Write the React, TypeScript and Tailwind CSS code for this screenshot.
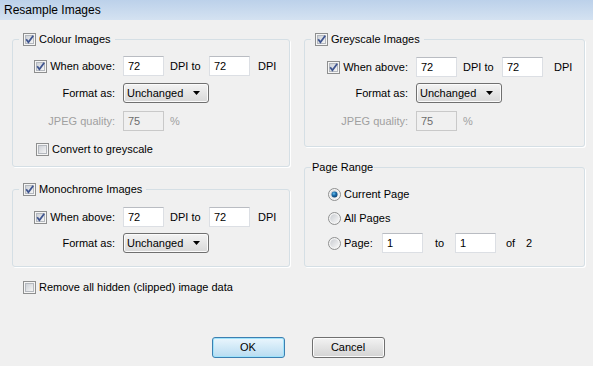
import type { ReactNode } from 'react';

function Check({ checked }: { checked?: boolean }) {
  return (
    <svg width="13" height="13" viewBox="0 0 13 13" className="shrink-0">
      <defs>
        <linearGradient id="cbFill" x1="0" y1="0" x2="1" y2="1">
          <stop offset="0" stopColor="#cbcfd5" />
          <stop offset="1" stopColor="#f7f7f7" />
        </linearGradient>
      </defs>
      <rect x="0.5" y="0.5" width="12" height="12" fill="#f5f5f5" stroke="#8e8f8f" />
      <rect x="2.5" y="2.5" width="8" height="8" fill="url(#cbFill)" stroke="#b4b8be" />
      {checked && (
        <path d="M3.2 6.3 L5.4 9.2 L10.2 2.8" fill="none" stroke="#3f5590" strokeWidth="1.8" />
      )}
    </svg>
  );
}

function Radio({ checked }: { checked?: boolean }) {
  return (
    <svg width="13" height="13" viewBox="0 0 13 13" className="shrink-0">
      <defs>
        <linearGradient id="rbFill" x1="0" y1="0" x2="1" y2="1">
          <stop offset="0" stopColor="#c9ccd1" />
          <stop offset="1" stopColor="#f8f8f8" />
        </linearGradient>
        <radialGradient id="rbDot" cx="0.4" cy="0.35" r="0.7">
          <stop offset="0" stopColor="#6fc2ec" />
          <stop offset="0.45" stopColor="#1c6fae" />
          <stop offset="1" stopColor="#0c3d6b" />
        </radialGradient>
      </defs>
      <circle cx="6.5" cy="6.5" r="6" fill="#f4f4f4" stroke="#8e8f8f" />
      <circle cx="6.5" cy="6.5" r="4.3" fill="url(#rbFill)" />
      {checked && <circle cx="6.5" cy="6.5" r="3" fill="url(#rbDot)" />}
    </svg>
  );
}

function TextBox({ value, disabled, className = '' }: { value: string; disabled?: boolean; className?: string }) {
  return (
    <div
      className={`flex h-[20px] w-[41px] shrink-0 items-center border pl-[4px] ${
        disabled
          ? 'border-[#c9c9c9] bg-[#f0f0f0] text-[#6d6d6d]'
          : 'border-[#dcdfe4] border-t-[#b9bcc2] bg-white'
      } ${className}`}
    >
      {value}
    </div>
  );
}

function Select({ className = '' }: { className?: string }) {
  return (
    <div
      className={`flex h-[20px] w-[86px] items-center justify-between rounded-[3px] border border-[#707070] bg-linear-to-b from-[#f3f3f3] to-[#d8d8d8] pl-[3px] pr-[8px] shadow-[inset_0_0_0_1px_#fbfbfb] ${className}`}
    >
      <span>Unchanged</span>
      <svg width="7" height="4" viewBox="0 0 7 4">
        <polygon points="0,0 7,0 3.5,4" fill="#000" />
      </svg>
    </div>
  );
}

function Group({ legend, className = '', children }: { legend: ReactNode; className?: string; children: ReactNode }) {
  return (
    <fieldset className={`rounded-[3px] border border-[#d5dfe5] shadow-[1px_1px_0_#fff] ${className}`}>
      {legend}
      {children}
    </fieldset>
  );
}

function CheckLegend({ label }: { label: string }) {
  return (
    <legend className="ml-[6px] px-[4px] leading-[13px]">
      <span className="flex h-[13px] items-center gap-[3px]">
        <Check checked />
        <span>{label}</span>
      </span>
    </legend>
  );
}

function DpiRow({ lw, dpiGap }: { lw: string; dpiGap: string }) {
  return (
    <div className="flex h-[20px] items-center">
      <div className={`${lw} flex items-center justify-end gap-[3px]`}>
        <Check checked />
        <span>When above:</span>
      </div>
      <TextBox value="72" className="ml-[8px]" />
      <span className="w-[45px] shrink-0 pl-[6px]">DPI to</span>
      <TextBox value="72" />
      <span className={dpiGap}>DPI</span>
    </div>
  );
}

function FormatRow({ lw, className = '' }: { lw: string; className?: string }) {
  return (
    <div className={`flex h-[20px] items-center ${className}`}>
      <div className={`${lw} text-right`}>Format as:</div>
      <Select className="ml-[8px]" />
    </div>
  );
}

function JpegRow({ lw, className = '' }: { lw: string; className?: string }) {
  return (
    <div className={`flex h-[20px] items-center text-[#a0a0a0] ${className}`}>
      <div className={`${lw} text-right`}>JPEG quality:</div>
      <TextBox value="75" disabled className="ml-[8px]" />
      <span className="ml-[6px]">%</span>
    </div>
  );
}

function Button({ label, primary }: { label: string; primary?: boolean }) {
  return (
    <div
      className={`flex h-[21px] w-[73px] items-center justify-center rounded-[3px] border ${
        primary
          ? 'border-[#3c7fb1] bg-linear-to-b from-[#eaf6fd] to-[#b8dcf1] shadow-[inset_0_0_0_1px_#9fe3fb]'
          : 'border-[#707070] bg-linear-to-b from-[#f3f3f3] to-[#d3d3d3] shadow-[inset_0_0_0_1px_#fbfbfb]'
      }`}
    >
      {label}
    </div>
  );
}

export default function App() {
  return (
    <div className="flex h-[366px] w-[593px] flex-col overflow-hidden bg-[#f0f0f0] font-['Liberation_Sans',Arial,sans-serif] text-[11px] leading-[13px] text-black">
      <div className="flex h-[20px] items-center bg-linear-to-b from-[#bcd1ea] to-[#d4e2f1] pl-[4px] text-[12px]">
        Resample Images
      </div>

      <div className="flex gap-[14px] pl-[12px] pt-[13px]">
        {/* left column */}
        <div className="flex w-[278px] flex-col">
          <Group legend={<CheckLegend label="Colour Images" />} className="pb-[7px]">
            <div className="pt-[10px]">
              <DpiRow lw="w-[102px]" dpiGap="ml-[8px]" />
              <FormatRow lw="w-[102px]" className="mt-[7px]" />
              <JpegRow lw="w-[102px]" className="mt-[8px]" />
              <div className="mt-[8px] flex h-[20px] items-center gap-[3px] pl-[23px]">
                <Check />
                <span>Convert to greyscale</span>
              </div>
            </div>
          </Group>

          <Group legend={<CheckLegend label="Monochrome Images" />} className="mt-[16px] pb-[13px]">
            <div className="pt-[11px]">
              <DpiRow lw="w-[102px]" dpiGap="ml-[8px]" />
              <FormatRow lw="w-[102px]" className="mt-[6px]" />
            </div>
          </Group>

          <div className="mt-[14px] flex h-[13px] items-center gap-[3px] pl-[11px]">
            <Check />
            <span>Remove all hidden (clipped) image data</span>
          </div>
        </div>

        {/* right column */}
        <div className="flex w-[281px] flex-col">
          <Group legend={<CheckLegend label="Greyscale Images" />} className="pb-[15px]">
            <div className="pt-[11px]">
              <DpiRow lw="w-[103px]" dpiGap="ml-[11px]" />
              <FormatRow lw="w-[103px]" className="mt-[6px]" />
              <JpegRow lw="w-[103px]" className="mt-[8px]" />
            </div>
          </Group>

          <Group
            legend={<legend className="ml-[6px] px-[1px] leading-[13px]">Page Range</legend>}
            className="mt-[14px] pb-[13px]"
          >
            <div className="flex flex-col pl-[23px] pt-[14px]">
              <div className="flex h-[13px] items-center gap-[3px]">
                <Radio checked />
                <span>Current Page</span>
              </div>
              <div className="mt-[11px] flex h-[13px] items-center gap-[3px]">
                <Radio />
                <span>All Pages</span>
              </div>
              <div className="mt-[8px] flex h-[20px] items-center">
                <Radio />
                <span className="w-[41px] shrink-0 pl-[3px]">Page:</span>
                <TextBox value="1" />
                <span className="w-[32px] shrink-0 pl-[12px]">to</span>
                <TextBox value="1" />
                <span className="ml-[10px] w-[20px]">of</span>
                <span>2</span>
              </div>
            </div>
          </Group>
        </div>
      </div>

      <div className="mt-auto flex justify-center gap-[27px] pb-[8px] pl-[3px]">
        <Button label="OK" primary />
        <Button label="Cancel" />
      </div>
    </div>
  );
}
